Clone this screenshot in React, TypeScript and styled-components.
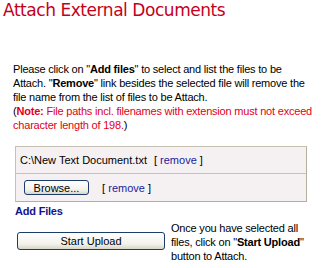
import React from 'react'
import styled, {createGlobalStyle} from 'styled-components'

const Global = createGlobalStyle`
body {
    margin: 0;
    background: #fff;
    font-family: Tahoma, "Liberation Sans", Arial, sans-serif;
    font-size: 11px;
    color: #000;
}
`

const Page = styled.div`
width: 331px;
height: 268px;
overflow: hidden;
`

const Title = styled.h1`
margin: 0;
padding: 0 0 0 3px;
font-family: Tahoma, "DejaVu Sans", sans-serif;
font-size: 17px;
font-weight: normal;
color: #c4001c;
line-height: 20px;
letter-spacing: -0.45px;
`

const Intro = styled.p`
margin: 42px 0 0 13px;
line-height: 14px;
letter-spacing: -0.2px;
white-space: nowrap;
b {
    font-weight: bold;
}
`

const Note = styled.span`
color: #e0001b;
`

const FileTable = styled.div`
margin: 14px 0 0 15px;
width: 290px;
border: 1px solid #c8c2b4;
border-right-color: #b4ae9f;
border-bottom-color: #b4ae9f;
background: #f5f1f3;
`

const FileRow = styled.div<{last?: boolean}>`
display: flex;
align-items: center;
gap: 7px;
height: ${p => p.last ? 27 : 26}px;
padding-left: 4px;
border-bottom: ${p => p.last ? 'none' : '1px solid #c8c2b4'};
`

const Link = styled.span`
color: #000;
a {
    color: #1a1a9c;
    text-decoration: none;
}
`

const Button = styled.button<{wide?: boolean}>`
box-sizing: border-box;
width: ${p => p.wide ? 148 : 65}px;
height: ${p => p.wide ? 18 : 15}px;
margin-left: ${p => p.wide ? 0 : 4}px;
padding: 0;
font-family: Tahoma, "Liberation Sans", Arial, sans-serif;
font-size: 11px;
line-height: 12px;
color: #000;
border: 1px solid #1c3c6c;
border-radius: 3px;
background: linear-gradient(#ffffff, #f2f1ea 70%, #d8d5c8);
`

const AddFiles = styled.div`
margin: 2px 0 0 15px;
font-size: 11px;
font-weight: bold;
color: #13138c;
letter-spacing: -0.2px;
line-height: 14px;
`

const UploadBar = styled.div`
display: flex;
align-items: flex-start;
margin: 2px 0 0 17px;
gap: 6px;
`

const ButtonWrap = styled.div`
padding-top: 12px;
`

const Help = styled.div`
padding-top: 1px;
line-height: 14px;
letter-spacing: -0.2px;
white-space: nowrap;
`

export default function App() {
    return (
        <Page>
            <Global/>
            <Title>Attach External Documents</Title>
            <Intro>
                Please click on "<b>Add files</b>" to select and list the files to be<br/>
                Attach. "<b>Remove</b>" link besides the selected file will remove the<br/>
                file name from the list of files to be Attach.<br/>
                (<Note><b>Note:</b> File paths incl. filenames with extension must not exceed<br/>
                character length of 198.</Note>)
            </Intro>
            <FileTable>
                <FileRow>
                    C:\New Text Document.txt
                    <Link>[ <a href="#">remove</a> ]</Link>
                </FileRow>
                <FileRow last>
                    <Button type="button">Browse...</Button>
                    <Link>&nbsp;&nbsp;[ <a href="#">remove</a> ]</Link>
                </FileRow>
            </FileTable>
            <AddFiles>Add Files</AddFiles>
            <UploadBar>
                <ButtonWrap>
                    <Button type="button" wide>Start Upload</Button>
                </ButtonWrap>
                <Help>
                    Once you have selected all<br/>
                    files, click on "<b>Start Upload</b>"<br/>
                    button to Attach.
                </Help>
            </UploadBar>
        </Page>
    )
}
